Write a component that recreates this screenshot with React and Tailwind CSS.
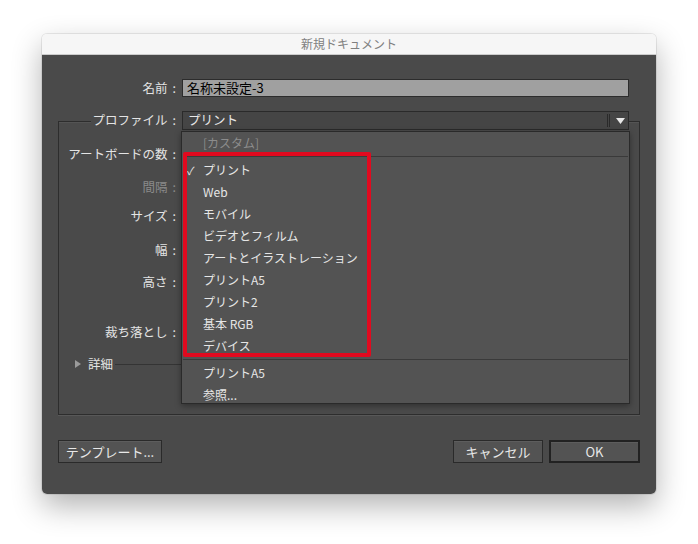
import React from 'react'

const font = { fontFamily: '"Noto Sans CJK JP", "Noto Sans", sans-serif' }

const Label = ({ children, dim, w = 'w-[123px]' }) => (
  <div className={`${w} shrink-0 pr-[6px] flex justify-end items-center text-[12.5px] ${dim ? 'text-[#8a8a8a]' : 'text-[#e4e4e4]'}`}>
    <span>{children}</span>
    <span className="ml-[5px]">:</span>
  </div>
)

const menuItems = ['プリント', 'Web', 'モバイル', 'ビデオとフィルム', 'アートとイラストレーション', 'プリントA5', 'プリント2', '基本 RGB', 'デバイス']

const ProfileMenu = () => (
  <div className="absolute left-[139px] top-[76px] w-[449px] h-[273px] bg-[#535353] border border-[#2a2a2a] shadow-[0_2px_6px_rgba(0,0,0,0.35)] text-[12px] text-[#e6e6e6] z-20">
    <div className="h-[22px] flex items-center pl-[21px] text-[#8c8c8c]">[カスタム]</div>
    <div className="h-[5px] pt-[2px] px-[1px]">
      <div className="h-px bg-[#3a3a3a]" />
    </div>
    {menuItems.map((item, i) => (
      <div key={item} className="h-[22px] flex items-center pl-[21px] relative">
        {i === 0 && <span className="absolute left-[5px] text-[11px]">✓</span>}
        {item}
      </div>
    ))}
    <div className="h-[5px] pt-[2px] px-[1px]">
      <div className="h-px bg-[#3a3a3a]" />
    </div>
    <div className="h-[22px] flex items-center pl-[21px]">プリントA5</div>
    <div className="h-[22px] flex items-center pl-[21px]">参照...</div>
  </div>
)

const Button = ({ children, className = '' }) => (
  <button className={`h-[23px] bg-[#535353] border border-[#2a2a2a] text-[13px] text-[#e8e8e8] shadow-[inset_0_1px_0_rgba(255,255,255,0.06)] ${className}`}>
    {children}
  </button>
)

export default function App() {
  return (
    <div className="w-[698px] h-[544px] bg-white pt-[34px] pl-[42px]" style={font}>
      <div className="w-[614px] rounded-[5px] overflow-hidden shadow-[0_12px_30px_rgba(0,0,0,0.3),0_0_0_1px_rgba(0,0,0,0.08)]">
        <div className="h-[21px] bg-[#f6f6f6] border-b border-[#cdcdcd] flex items-center justify-center text-[12px] text-[#808080]">
          新規ドキュメント
        </div>

        <div className="relative bg-[#4a4a4a] px-[16px] pt-[24px] pb-[31px]">
          <div className="flex items-center h-[18px]">
            <Label w="w-[124px]">名前</Label>
            <div className="w-[447px] h-[18px] bg-[#a0a0a0] border border-[#2c2c2c] flex items-center pl-[4px] text-[13px] text-black">
              名称未設定-3
            </div>
          </div>

          <div className="mt-[24px] border border-[#2d2d2d] shadow-[0_1px_0_rgba(255,255,255,0.08),inset_0_1px_0_rgba(255,255,255,0.06)] pb-[40px]">
            <div className="-mt-[11px] flex items-center h-[19px]">
              <div className="w-[123px] shrink-0 flex justify-end">
                <div className="bg-[#4a4a4a] pl-[2px] pr-[6px] flex text-[12.5px] text-[#e4e4e4]">
                  <span>プロファイル</span>
                  <span className="ml-[5px]">:</span>
                </div>
              </div>
              <div className="w-[447px] h-[19px] bg-[#454545] border border-[#2a2a2a] flex items-center text-[12.5px] text-[#e8e8e8]">
                <span className="pl-[5px] flex-1">プリント</span>
                <div className="w-[3px] h-[13px] border-x border-[#2a2a2a] mr-[6px]" />
                <svg width="9" height="6" viewBox="0 0 9 6" className="mr-[3px]">
                  <path d="M0 0h9L4.5 6z" fill="#e8e8e8" />
                </svg>
              </div>
            </div>

            <div className="mt-[14px] h-[20px] flex items-center"><Label>アートボードの数</Label></div>
            <div className="mt-[13px] h-[20px] flex items-center"><Label dim>間隔</Label></div>
            <div className="mt-[9px] h-[20px] flex items-center"><Label>サイズ</Label></div>
            <div className="mt-[14px] h-[20px] flex items-center"><Label>幅</Label></div>
            <div className="mt-[12px] h-[20px] flex items-center"><Label>高さ</Label></div>
            <div className="mt-[30px] h-[20px] flex items-center"><Label>裁ち落とし</Label></div>
            <div className="mt-[12px] h-[20px] flex items-center">
              <svg width="6" height="8" viewBox="0 0 6 8" className="ml-[16px]">
                <path d="M0 0l6 4-6 4z" fill="#9a9a9a" />
              </svg>
              <span className="ml-[7px] text-[12.5px] text-[#e4e4e4]">詳細</span>
              <div className="flex-1 h-px bg-[#343434] ml-[2px] mr-[10px]" />
            </div>
          </div>

          <div className="mt-[25px] flex items-center">
            <Button className="w-[104px]">テンプレート...</Button>
            <div className="flex-1" />
            <Button className="w-[90px]">キャンセル</Button>
            <Button className="w-[91px] ml-[6px] border-2 border-[#222]">OK</Button>
          </div>

          <ProfileMenu />

          <div className="absolute left-[141px] top-[97px] w-[188px] h-[205px] border-[4px] border-[#e10a1f] rounded-[2px] z-30" />
        </div>
      </div>
    </div>
  )
}
